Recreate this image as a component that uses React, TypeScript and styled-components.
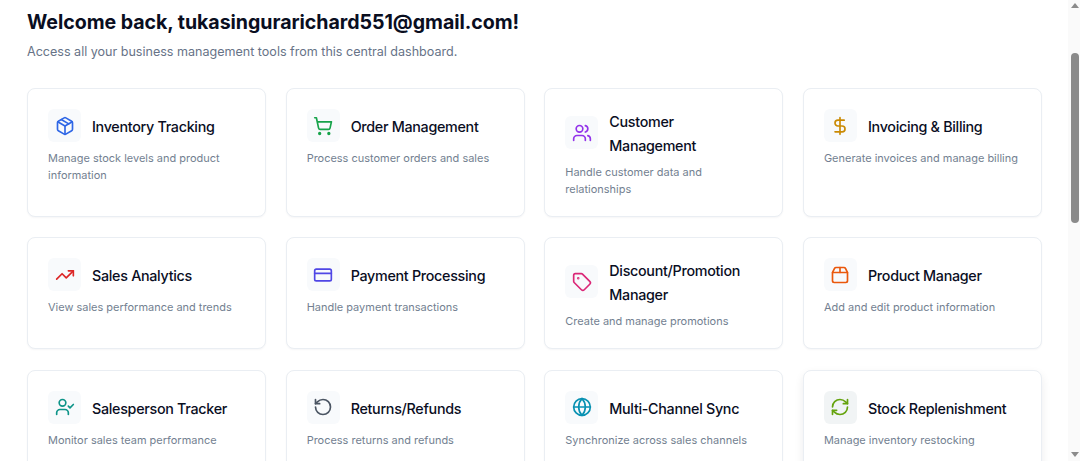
import React from "react";
import styled, { createGlobalStyle } from "styled-components";
import {
  Package, ShoppingCart, Users, DollarSign, TrendingUp, CreditCard, Tag,
  Package2, UserCheck, RotateCcw, Globe, RefreshCw,
} from "lucide-react";

const Global = createGlobalStyle`
  html, body { margin: 0; padding: 0; height: 461px; overflow: hidden; background: #fff; }
  #root { height: 461px; }
`;

const Page = styled.div`
  display: flex;
  height: 461px;
  overflow: hidden;
  font-family: Inter, "Noto Sans", sans-serif;
`;

const Main = styled.main`
  flex: 1;
  min-width: 0;
  padding: 10px 26px 0 27px;
`;

const Heading = styled.h1`
  margin: 0;
  font-size: 19.6px;
  line-height: 24px;
  font-weight: 700;
  letter-spacing: -0.05px;
  color: #0a0e1f;
`;

const Sub = styled.p`
  margin: 8px 0 0;
  font-size: 12.55px;
  line-height: 20px;
  color: #677387;
`;

const Grid = styled.div`
  display: grid;
  grid-template-columns: repeat(4, 1fr);
  grid-auto-rows: auto;
  column-gap: 19.6px;
  row-gap: 20.4px;
  margin-top: 26px;
`;

const Card = styled.section<{ $raised?: boolean; $h: number }>`
  box-sizing: border-box;
  height: ${(p) => p.$h}px;
  padding: 20px;
  background: #fff;
  border: 1px solid #eaeef3;
  border-radius: 8px;
  box-shadow: ${(p) => (p.$raised ? "0 4px 10px rgba(15,23,42,.08)" : "0 1px 2px rgba(15,23,42,.04)")};
`;

const CardHead = styled.div`
  display: flex;
  align-items: center;
  gap: 11px;
`;

const IconBox = styled.div<{ $c: string; $active?: boolean }>`
  flex: none;
  width: 33px;
  height: 33px;
  display: flex;
  align-items: center;
  justify-content: center;
  border-radius: 6px;
  background: ${(p) => (p.$active ? "#f1f4f5" : "#f8fafc")};
  color: ${(p) => p.$c};
`;

const Title = styled.h3`
  margin: 1px 0 -1px;
  font-size: 14.3px;
  line-height: 23.5px;
  font-weight: 500;
  letter-spacing: -0.29px;
  color: #0a0e1f;
`;

const Desc = styled.p`
  margin: 8px 0 0;
  font-size: 10.97px;
  line-height: 17px;
  color: #737f91;
`;

const Track = styled.aside`
  flex: none;
  box-sizing: border-box;
  width: 12px;
  background: #fafafa;
  padding-left: 3px;
  display: flex;
  flex-direction: column;
  align-items: flex-start;
`;

const ArrowUp = styled.div`
  width: 0;
  height: 0;
  margin-top: 3px;
  border-left: 4px solid transparent;
  border-right: 4px solid transparent;
  border-bottom: 5px solid #8b8b8b;
`;

const Thumb = styled.div`
  width: 8px;
  height: 170px;
  margin-top: 45px;
  border-radius: 4px;
  background: #8a8a8a;
`;

const ArrowDown = styled.div`
  width: 0;
  height: 0;
  margin-top: auto;
  margin-bottom: 4px;
  border-left: 4px solid transparent;
  border-right: 4px solid transparent;
  border-top: 5px solid #8b8b8b;
`;

const S = { size: 20, strokeWidth: 2 };

const items = [
  { h: 129, c: "#2f67e6", I: Package, t: "Inventory Tracking", d: "Manage stock levels and product information" },
  { h: 129, c: "#16a34a", I: ShoppingCart, t: "Order Management", d: "Process customer orders and sales" },
  { h: 129, c: "#9333ea", I: Users, t: "Customer Management", d: "Handle customer data and relationships" },
  { h: 129, c: "#ca8a04", I: DollarSign, t: "Invoicing & Billing", d: "Generate invoices and manage billing" },
  { h: 112, c: "#dc2626", I: TrendingUp, t: "Sales Analytics", d: "View sales performance and trends" },
  { h: 112, c: "#4f46e5", I: CreditCard, t: "Payment Processing", d: "Handle payment transactions" },
  { h: 112, c: "#db2777", I: Tag, t: "Discount/Promotion Manager", d: "Create and manage promotions" },
  { h: 112, c: "#ea580c", I: Package2, t: "Product Manager", d: "Add and edit product information" },
  { h: 112, c: "#0d9488", I: UserCheck, t: "Salesperson Tracker", d: "Monitor sales team performance" },
  { h: 112, c: "#4b5563", I: RotateCcw, t: "Returns/Refunds", d: "Process returns and refunds" },
  { h: 112, c: "#0891b2", I: Globe, t: "Multi-Channel Sync", d: "Synchronize across sales channels" },
  { h: 112, c: "#65a30d", I: RefreshCw, t: "Stock Replenishment", d: "Manage inventory restocking", active: true },
];

export default function App() {
  return (
    <Page>
      <Global />
      <Main>
        <Heading>Welcome back, tukasingurarichard551@gmail.com!</Heading>
        <Sub>Access all your business management tools from this central dashboard.</Sub>
        <Grid>
          {items.map(({ h, c, I, t, d, active }) => (
            <Card key={t} $h={h} $raised={active}>
              <CardHead>
                <IconBox $c={c} $active={active}><I {...S} /></IconBox>
                <Title>{t}</Title>
              </CardHead>
              <Desc>{d}</Desc>
            </Card>
          ))}
        </Grid>
      </Main>
      <Track>
        <ArrowUp />
        <Thumb />
        <ArrowDown />
      </Track>
    </Page>
  );
}
